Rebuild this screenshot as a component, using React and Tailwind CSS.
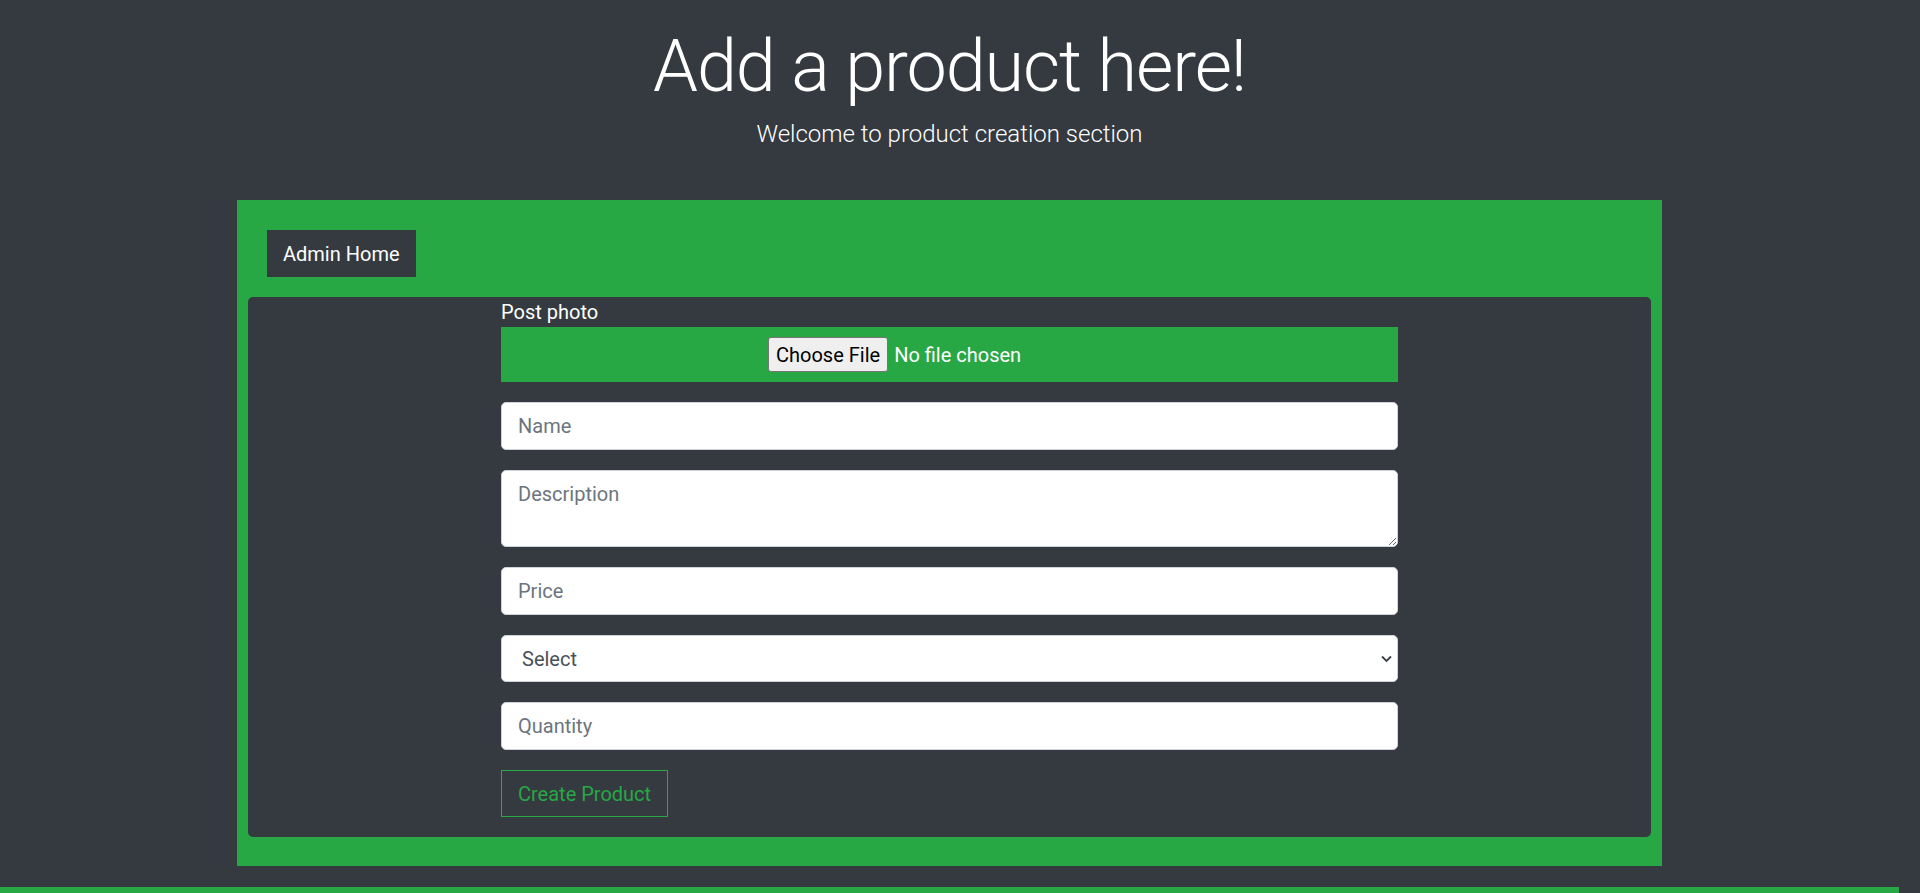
import React, { useState } from "react";

const Field = ({ placeholder, value, onChange }) => (
  <input
    type="text"
    placeholder={placeholder}
    value={value}
    onChange={onChange}
    className="w-full h-[47.5px] rounded-[5px] border border-[#ced4da] bg-white px-4 text-[20px] text-[#495057] placeholder:text-[#6c757d] outline-none"
  />
);

const App = () => {
  const [form, setForm] = useState({
    name: "",
    description: "",
    price: "",
    category: "",
    quantity: "",
  });

  const update = (key) => (e) => setForm({ ...form, [key]: e.target.value });

  return (
    <div className="min-h-screen bg-[#343a40] pr-[21px] font-['Roboto',sans-serif] text-white">
      <div className="pt-[24px] text-center">
        <h1 className="text-[72px] leading-[1.2] font-light tracking-[-1.1px]">Add a product here!</h1>
        <p className="mt-[6px] text-[24px] leading-[36px] font-light">
          Welcome to product creation section
        </p>
      </div>

      <div className="mx-auto mt-[48px] w-[1425px] bg-[#28a745] px-[11px] pt-[30px] pb-[29px]">
        <button className="ml-[19px] h-[47px] bg-[#343a40] px-4 text-[20px] text-white">
          Admin Home
        </button>

        <div className="mt-[20px] rounded-[5px] bg-[#343a40] pb-[20px]">
          <div className="mx-auto flex w-[897px] flex-col">
            <label className="text-[20px] leading-[30px]">Post photo</label>
            <div className="flex h-[55px] items-center justify-center bg-[#28a745]">
              <input
                type="file"
                className="w-[363px] text-[20px] text-white file:mr-[6px] file:h-[35px] file:rounded-[3px] file:border file:border-[#767676] file:bg-[#efefef] file:px-[7px] file:text-[20px] file:text-black"
              />
            </div>

            <div className="mt-[20px] flex flex-col gap-[20px]">
              <Field placeholder="Name" value={form.name} onChange={update("name")} />
              <textarea
                placeholder="Description"
                value={form.description}
                onChange={update("description")}
                className="block h-[77.5px] w-full rounded-[5px] border border-[#ced4da] bg-white px-4 py-2 text-[20px] leading-[30px] text-[#495057] placeholder:text-[#6c757d] outline-none"
              />
              <Field placeholder="Price" value={form.price} onChange={update("price")} />
              <div className="relative">
                <select
                  value={form.category}
                  onChange={update("category")}
                  className="w-full h-[47.5px] appearance-none rounded-[5px] border border-[#ced4da] bg-white pl-[20px] text-[20px] text-[#495057] outline-none"
                >
                  <option value="">Select</option>
                  <option value="electronics">Electronics</option>
                  <option value="clothing">Clothing</option>
                  <option value="books">Books</option>
                </select>
                <svg
                  className="pointer-events-none absolute right-[6px] top-1/2 -translate-y-1/2"
                  width="11"
                  height="8"
                  viewBox="0 0 11 8"
                  fill="none"
                >
                  <path d="M1 1.5 L5.5 6 L10 1.5" stroke="#3b4046" strokeWidth="1.8" />
                </svg>
              </div>
              <Field placeholder="Quantity" value={form.quantity} onChange={update("quantity")} />
              <div>
                <button className="h-[47.5px] border border-[#28a745] px-4 text-[20px] text-[#28a745]">
                  Create Product
                </button>
              </div>
            </div>
          </div>
        </div>
      </div>

      <div className="mt-[21px] h-[180px] bg-[#28a745]" />
    </div>
  );
};

export default App;
